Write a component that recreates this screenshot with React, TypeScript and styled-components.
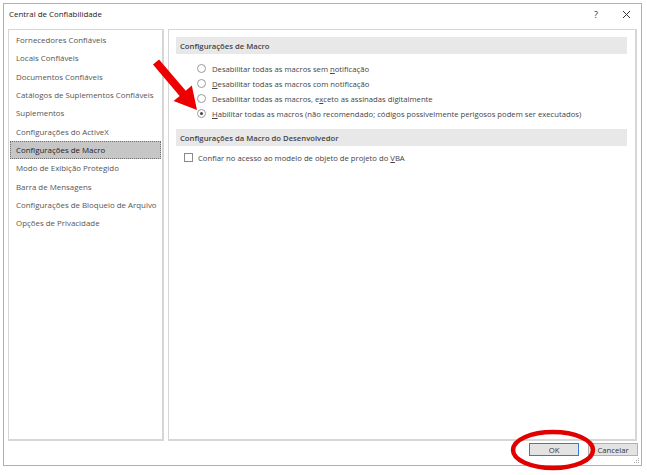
import React from "react";
import styled, { createGlobalStyle } from "styled-components";

const GlobalStyle = createGlobalStyle`
  html, body {
    margin: 0;
    padding: 0;
    background: #ffffff;
  }
  body {
    font-family: "Open Sans", "Noto Sans", sans-serif;
    font-size: 7.7px;
  }
`;

const categories = [
  "Fornecedores Confiáveis",
  "Locais Confiáveis",
  "Documentos Confiáveis",
  "Catálogos de Suplementos Confiáveis",
  "Suplementos",
  "Configurações do ActiveX",
  "Configurações de Macro",
  "Modo de Exibição Protegido",
  "Barra de Mensagens",
  "Configurações de Bloqueio de Arquivo",
  "Opções de Privacidade",
];

const macroOptions: React.ReactNode[] = [
  <>Desabilitar todas as macros sem <u>n</u>otificação</>,
  <><u>D</u>esabilitar todas as macros com notificação</>,
  <>Desabilitar todas as macros, e<u>x</u>ceto as assinadas digitalmente</>,
  <><u>H</u>abilitar todas as macros (não recomendado; códigos possivelmente perigosos podem ser executados)</>,
];

const Page = styled.div`
  position: relative;
  width: 647px;
  height: 475px;
  padding: 3px 0 0 3px;
  box-sizing: border-box;
`;

const Dialog = styled.div`
  width: 639px;
  height: 463px;
  box-sizing: border-box;
  border: 1px solid #8fb6e4;
  background: #fff;
  display: flex;
  flex-direction: column;
  position: relative;
`;

const TitleBar = styled.div`
  height: 25px;
  box-sizing: border-box;
  display: flex;
  align-items: flex-start;
  padding: 1px 0 0 5px;
  color: #222;
  font-size: 7.9px;
`;

const Title = styled.div`
  flex: 1;
  line-height: 18px;
`;

const TitleButton = styled.div`
  width: 30px;
  height: 18px;
  display: flex;
  align-items: center;
  justify-content: center;
  color: #333;
  font-size: 9px;
`;

const Body = styled.div`
  display: flex;
  gap: 4px;
  padding: 0 4px;
  height: 412px;
`;

const Panel = styled.div<{ $width?: number }>`
  box-sizing: border-box;
  border: 1px solid #d6d6d6;
  border-right-width: 2px;
  border-bottom-width: 2px;
  ${(p) => (p.$width ? `width: ${p.$width}px;` : "flex: 1;")}
  background: #fff;
`;

const CategoryList = styled.div`
  padding-top: 1px;
`;

const Category = styled.div<{ $active?: boolean }>`
  height: 18.3px;
  display: flex;
  align-items: center;
  padding-left: 5px;
  margin: 0 1px;
  box-sizing: border-box;
  font-size: 7.9px;
  color: ${(p) => (p.$active ? "#222" : "#555")};
  background: ${(p) => (p.$active ? "#c6c6c6" : "transparent")};
  border: 1px dotted ${(p) => (p.$active ? "#6f6f6f" : "transparent")};
`;

const Content = styled.div`
  padding: 7px 8px 0 7px;
`;

const SectionHeader = styled.div`
  height: 17px;
  display: flex;
  align-items: center;
  padding-left: 4px;
  background: #e8e8e8;
  font-weight: 600;
  color: #444;
`;

const OptionGroup = styled.div<{ $top: number }>`
  margin-top: ${(p) => p.$top}px;
  margin-bottom: 8px;
`;

const OptionRow = styled.div<{ $indent: number }>`
  height: 15px;
  display: flex;
  align-items: center;
  gap: 5px;
  padding-left: ${(p) => p.$indent}px;
  color: #444;

  u {
    text-decoration: underline;
    text-underline-offset: 1px;
  }
`;

const Radio = styled.span<{ $checked?: boolean }>`
  width: 9px;
  height: 9px;
  box-sizing: border-box;
  border-radius: 50%;
  border: 1px solid #9a9a9a;
  background: #fff;
  display: flex;
  align-items: center;
  justify-content: center;
  margin-right: 1px;

  &::after {
    content: "";
    width: 3px;
    height: 3px;
    border-radius: 50%;
    background: ${(p) => (p.$checked ? "#444" : "transparent")};
  }
`;

const Checkbox = styled.span`
  width: 9px;
  height: 9px;
  box-sizing: border-box;
  border: 1px solid #8a8a8a;
  background: #fff;
`;

const Footer = styled.div`
  flex: 1;
  display: flex;
  justify-content: flex-end;
  align-items: flex-start;
  gap: 9px;
  padding: 2px 3px 0 0;
`;

const Button = styled.button<{ $default?: boolean }>`
  width: 50px;
  height: 13px;
  padding: 0;
  box-sizing: border-box;
  font-family: inherit;
  font-size: 7.7px;
  color: #333;
  background: #e3e3e3;
  border: 1px solid ${(p) => (p.$default ? "#3a79d6" : "#b0b0b0")};
  display: flex;
  align-items: center;
  justify-content: center;
`;

const Grip = styled.svg`
  position: absolute;
  right: 1px;
  bottom: 1px;
`;

const Annotation = styled.svg`
  position: absolute;
  left: 0;
  top: 0;
  pointer-events: none;
`;

export default function App() {
  return (
    <Page>
      <GlobalStyle />
      <Dialog>
        <TitleBar>
          <Title>Central de Confiabilidade</Title>
          <TitleButton>?</TitleButton>
          <TitleButton>
            <svg width="9" height="9" viewBox="0 0 9 9">
              <path d="M1 1 L8 8 M8 1 L1 8" stroke="#333" strokeWidth="1" />
            </svg>
          </TitleButton>
        </TitleBar>
        <Body>
          <Panel $width={156}>
            <CategoryList>
              {categories.map((c) => (
                <Category key={c} $active={c === "Configurações de Macro"}>
                  {c}
                </Category>
              ))}
            </CategoryList>
          </Panel>
          <Panel>
            <Content>
              <SectionHeader>Configurações de Macro</SectionHeader>
              <OptionGroup $top={7}>
                {macroOptions.map((o, i) => (
                  <OptionRow key={i} $indent={21}>
                    <Radio $checked={i === 3} />
                    <span>{o}</span>
                  </OptionRow>
                ))}
              </OptionGroup>
              <SectionHeader>Configurações da Macro do Desenvolvedor</SectionHeader>
              <OptionGroup $top={4}>
                <OptionRow $indent={8}>
                  <Checkbox />
                  <span>
                    Confiar no acesso ao modelo de objeto de projeto do <u>V</u>BA
                  </span>
                </OptionRow>
              </OptionGroup>
            </Content>
          </Panel>
        </Body>
        <Footer>
          <Button $default>OK</Button>
          <Button>Cancelar</Button>
        </Footer>
        <Grip width="6" height="6" viewBox="0 0 6 6">
          <rect x="4" y="0" width="1" height="1" fill="#aaa" />
          <rect x="2" y="2" width="1" height="1" fill="#aaa" />
          <rect x="4" y="2" width="1" height="1" fill="#aaa" />
          <rect x="0" y="4" width="1" height="1" fill="#aaa" />
          <rect x="2" y="4" width="1" height="1" fill="#aaa" />
          <rect x="4" y="4" width="1" height="1" fill="#aaa" />
        </Grip>
      </Dialog>
      <Annotation width="647" height="475" viewBox="0 0 647 475">
        <polygon
          points="152.96,64.6 159.04,59.4 185.74,90.7 191.83,85.5 197,110 173.57,101.1 179.66,95.9"
          fill="#ee0000"
        />
        <ellipse cx="553" cy="450" rx="40" ry="18" fill="none" stroke="#e00000" strokeWidth="4.5" />
      </Annotation>
    </Page>
  );
}
